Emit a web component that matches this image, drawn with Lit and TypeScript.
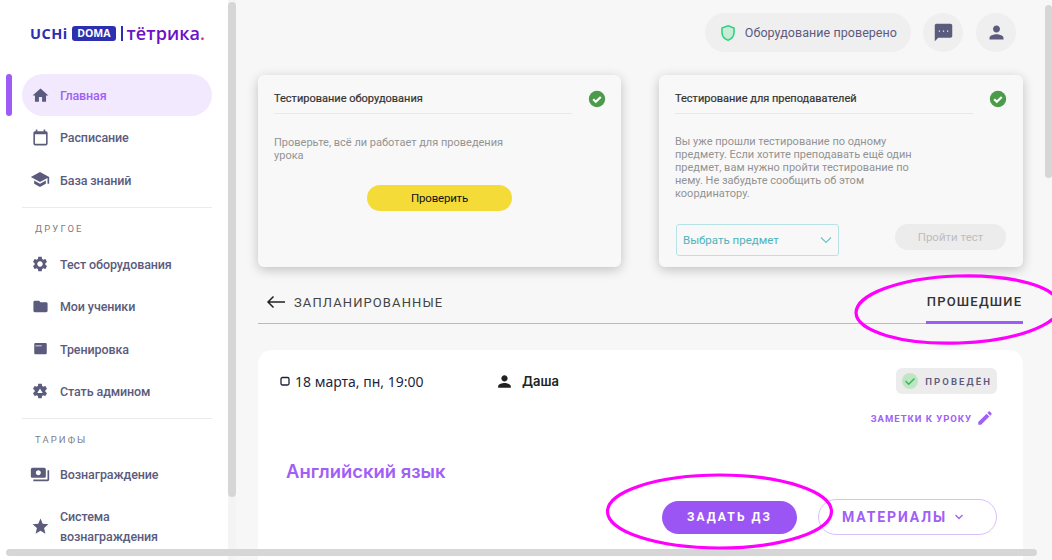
import { LitElement, html, css, svg } from "lit";
import { customElement } from "lit/decorators.js";

const P: Record<string, string> = {
  home: "M10 20v-6h4v6h5v-8h3L12 3 2 12h3v8z",
  cal: "M19 4h-1V2h-2v2H8V2H6v2H5c-1.11 0-1.99.9-1.99 2L3 20c0 1.1.89 2 2 2h14c1.1 0 2-.9 2-2V6c0-1.1-.9-2-2-2zm0 16H5V8h14v12z",
  school: "M5 13.18v4L12 21l7-3.82v-4L12 17l-7-3.82zM12 3L1 9l11 6 9-4.91V17h2V9L12 3z",
  gear: "M19.14 12.94c.04-.3.06-.61.06-.94 0-.32-.02-.64-.07-.94l2.03-1.58c.18-.14.23-.41.12-.61l-1.92-3.32c-.12-.22-.37-.29-.59-.22l-2.39.96c-.5-.38-1.03-.7-1.62-.94l-.36-2.54c-.04-.24-.24-.41-.48-.41h-3.84c-.24 0-.43.17-.47.41l-.36 2.54c-.59.24-1.13.57-1.62.94l-2.39-.96c-.22-.08-.47 0-.59.22L2.74 8.87c-.12.21-.08.47.12.61l2.03 1.58c-.05.3-.09.63-.09.94s.02.64.07.94l-2.03 1.58c-.18.14-.23.41-.12.61l1.92 3.32c.12.22.37.29.59.22l2.39-.96c.5.38 1.03.7 1.62.94l.36 2.54c.05.24.24.41.48.41h3.84c.24 0 .44-.17.47-.41l.36-2.54c.59-.24 1.13-.56 1.62-.94l2.39.96c.22.08.47 0 .59-.22l1.92-3.32c.12-.22.07-.47-.12-.61l-2.01-1.58zM12 15.6c-1.98 0-3.6-1.62-3.6-3.6s1.62-3.6 3.6-3.6 3.6 1.62 3.6 3.6-1.62 3.6-3.6 3.6z",
  admin: "M19.14 12.94c.04-.3.06-.61.06-.94 0-.32-.02-.64-.07-.94l2.03-1.58c.18-.14.23-.41.12-.61l-1.92-3.32c-.12-.22-.37-.29-.59-.22l-2.39.96c-.5-.38-1.03-.7-1.62-.94l-.36-2.54c-.04-.24-.24-.41-.48-.41h-3.84c-.24 0-.43.17-.47.41l-.36 2.54c-.59.24-1.13.57-1.62.94l-2.39-.96c-.22-.08-.47 0-.59.22L2.74 8.87c-.12.21-.08.47.12.61l2.03 1.58c-.05.3-.09.63-.09.94s.02.64.07.94l-2.03 1.58c-.18.14-.23.41-.12.61l1.92 3.32c.12.22.37.29.59.22l2.39-.96c.5.38 1.03.7 1.62.94l.36 2.54c.05.24.24.41.48.41h3.84c.24 0 .44-.17.47-.41l.36-2.54c.59-.24 1.13-.56 1.62-.94l2.39.96c.22.08.47 0 .59-.22l1.92-3.32c.12-.22.07-.47-.12-.61l-2.01-1.58zM12 8.500l3.600 6H8.400z",
  folder: "M10 4H4c-1.1 0-1.99.9-1.99 2L2 18c0 1.1.9 2 2 2h16c1.1 0 2-.9 2-2V8c0-1.1-.9-2-2-2h-8l-2-2z",
  web: "M20 3H4c-1.11 0-2 .9-2 2v14c0 1.1.89 2 2 2h16c1.100 0 2-.9 2-2V5c0-1.100-.9-2-2-2zM4 8.500V7h10v1.500H4z",
  pay: "M19 14V6c0-1.100-.9-2-2-2H3c-1.100 0-2 .9-2 2v8c0 1.100.9 2 2 2h14c1.100 0 2-.9 2-2zm-9-1c-1.660 0-3-1.340-3-3s1.340-3 3-3 3 1.340 3 3-1.340 3-3 3zm13-6v11c0 1.100-.9 2-2 2H4v-2h17V7h2z",
  star: "M12 17.270L18.180 21l-1.640-7.030L22 9.240l-7.190-.61L12 2 9.190 8.630 2 9.240l5.460 4.730L5.820 21z",
  chat: "M20 2H4c-1.100 0-2 .9-2 2v18l4-4h14c1.100 0 2-.9 2-2V4c0-1.100-.9-2-2-2zM8 11.200H6.600V9.800H8zm4.700 0h-1.400V9.800h1.400zm4.700 0H16V9.800h1.400z",
  person: "M12 12c2.210 0 4-1.790 4-4s-1.790-4-4-4-4 1.790-4 4 1.790 4 4 4zm0 2c-2.670 0-8 1.340-8 4v2h16v-2c0-2.660-5.330-4-8-4z",
  edit: "M3 17.250V21h3.750L17.810 9.940l-3.750-3.750L3 17.250zM20.710 7.040c.39-.39.39-1.020 0-1.410l-2.340-2.340c-.39-.39-1.020-.39-1.410 0l-1.830 1.830 3.750 3.750 1.830-1.830z",
};

const icon = (n: string, size = 20) =>
  html`<svg width=${size} height=${size} viewBox="0 0 24 24" fill="currentColor" fill-rule="evenodd"><path d=${P[n]}></path></svg>`;

const okBadge = html`<svg class="ok" width="18" height="18" viewBox="0 0 18 18"><circle cx="9" cy="9" r="8.200" fill="#4b9b4b"></circle><path d="M5.200 9.300l2.600 2.500 5-4.800" fill="none" stroke="#fff" stroke-width="2.200"></path></svg>`;

@customElement("app-root")
export class AppRoot extends LitElement {
  static styles = css`
    :host { display: block; position: relative; width: 1052px; height: 560px; overflow: hidden; background: #fff; font-family: Roboto, "Liberation Sans", sans-serif; }
    * { box-sizing: border-box; }
    .app { display: flex; height: 560px; }

    .side { flex: 0 0 236px; width: 236px; padding: 0 16px 0 22px; background: #fff; border-right: 8px solid #f4f4f4; color: #5b5b7e; }
    .logo { display: flex; align-items: center; height: 74px; padding: 0 0 8px 8px; white-space: nowrap; font-family: "Open Sans", sans-serif; font-weight: 700; }
    .uchi { color: #2b2fb0; font-size: 14.5px; letter-spacing: .5px; font-weight: 700; }
    .doma { background: #2b2fb0; color: #fff; font-size: 10.5px; border-radius: 3px; padding: 1px 5.500px; margin: 0 5px 0 4px; line-height: 13px; }
    .bar { width: 1.5px; height: 15px; background: #2b2fb0; margin-right: 4px; }
    .tetrika { color: #6a11c9; font-size: 18px; font-weight: 600; letter-spacing: .1px; line-height: 18px; }
    .dot { color: #e8288f; }
    .item { position: relative; display: flex; align-items: center; gap: 10px; height: 42.3px; padding-left: 8px; font-size: 12.5px; line-height: 20px; font-weight: 500; letter-spacing: -.1px; }
    .ic { flex: none; display: flex; align-items: center; justify-content: center; width: 20px; }
    .lab { padding-top: 2px; }
    .item.active { background: #f2e9fe; border-radius: 21px; color: #a060f5; }
    .item.active .ic { color: #5b5b7e; }
    .item.active::before { content: ""; position: absolute; left: -16px; top: 0; width: 6px; height: 42px; border-radius: 3px; background: #9d5cf5; }
    .item.tall { height: 62px; }
    .sep { height: 1px; background: #ebebeb; margin-top: 6px; }
    .group { height: 35px; padding: 14px 0 0 13px; font-size: 9.5px; line-height: 14px; letter-spacing: 2.1px; color: #7d7d85; font-weight: 400; }
    .group.short { height: 34px; }

    .main { flex: 1; min-width: 0; background: #f7f7f7; padding: 0 29px 0 22px; }
    .top { display: flex; justify-content: flex-end; align-items: center; gap: 12px; height: 75px; padding: 0 7px 10px 0; color: #5b5b7e; }
    .pill { display: flex; align-items: center; gap: 8px; height: 39px; padding: 0 14px 0 14px; border-radius: 20px; background: #efefef; font-size: 12.5px; font-weight: 400; letter-spacing: .05px; }
    .circle { display: flex; align-items: center; justify-content: center; width: 40px; height: 39px; border-radius: 50%; background: #efefef; }
    .circle + .circle { margin-left: 1px; }

    .cards { display: grid; grid-template-columns: 363px 364px; gap: 38px; }
    .card { position: relative; height: 192px; background: #f8f8f8; border-radius: 6px; box-shadow: 0 3px 12px rgba(0,0,0,.22); padding: 15px 16px; }
    .card h3 { margin: 0; width: 298px; height: 24px; font-size: 11px; line-height: 17px; font-weight: 400; color: #333; border-bottom: 1px solid #e9e9e9; -webkit-text-stroke: .2px #333; }
    .ok { position: absolute; left: 330px; top: 15px; }
    .card p { margin: 22px 0 0; width: 240px; font-size: 11px; line-height: 13px; color: #939393; }
    .card.two p { margin-top: 21px; }
    .action { display: flex; justify-content: center; margin-top: 23px; }
    .yellow { display: flex; align-items: center; justify-content: center; width: 145px; height: 26px; border-radius: 13px; background: #f4db37; color: #111; font-size: 11.5px; letter-spacing: -.2px; }
    .row { display: flex; justify-content: space-between; align-items: flex-start; margin-top: 24px; padding: 0 1px; }
    .select { display: flex; align-items: center; justify-content: space-between; width: 163px; height: 32px; padding: 0 6px 0 6px; border: 1px solid #b8e3e6; border-radius: 3px; font-size: 11.5px; color: #4fb3ba; }
    .gray { display: flex; align-items: center; justify-content: center; width: 111px; height: 26px; border-radius: 13px; background: #ececec; color: #bdbdbd; font-size: 11.5px; }

    .tabs { display: flex; justify-content: space-between; align-items: stretch; height: 57px; border-bottom: 1px solid #bbb; font-size: 13px; letter-spacing: 1.1px; color: #444; }
    .tab { display: flex; align-items: center; gap: 8px; padding: 14px 0 0 8px; font-weight: 400; }
    .tab.on { padding: 14px 0 0; width: 97px; justify-content: center; color: #333; font-weight: 500; letter-spacing: 1.2px; border-bottom: 3px solid #9d5cf5; margin-bottom: -1px; white-space: nowrap; }

    .lesson { margin-top: 26px; height: 230px; background: #fff; border-radius: 14px; padding: 19px 26px 0 22px; }
    .meta { display: flex; align-items: flex-start; }
    .when { display: flex; align-items: center; gap: 5px; width: 215px; height: 24px; font-size: 14px; color: #1f1f3c; font-family: "Noto Sans", sans-serif; }
    .who { display: flex; align-items: center; gap: 8px; height: 24px; font-size: 13px; font-weight: 600; color: #222; font-family: Inter, sans-serif; }
    .status { display: flex; align-items: center; gap: 6px; margin-left: auto; height: 26px; margin-top: -1px; padding: 0 5px 0 5px; border-radius: 6px; background: #ececec; font-size: 9.5px; font-weight: 600; letter-spacing: 2.1px; color: #5b5b7e; }
    .notes { display: flex; align-items: center; justify-content: flex-end; gap: 4px; margin-top: 16px; padding-right: 3px; font-size: 9.5px; font-weight: 700; letter-spacing: 1px; color: #a060f5; height: 16px; }
    .subject { margin-top: 33px; margin-left: 6px; font-size: 18.4px; line-height: 24px; font-weight: 600; color: #a060f5; font-family: Inter, sans-serif; }
    .btns { display: flex; justify-content: flex-end; align-items: center; gap: 21px; margin-top: 16px; }
    .hw { display: flex; align-items: center; justify-content: center; width: 135px; height: 33px; border-radius: 17px; background: #9a55f4; color: #fff; font-size: 12px; font-weight: 700; letter-spacing: 2.1px; }
    .mat { display: flex; align-items: center; justify-content: center; gap: 7px; width: 179px; height: 36px; padding-right: 9px; border-radius: 18px; border: 1px solid #d9bffb; color: #a060f5; font-size: 14px; font-weight: 700; letter-spacing: 1.9px; }

    .vbar { position: absolute; left: 228px; top: 2px; width: 8px; height: 495px; background: #d6d6d6; border-radius: 4px; }
    .mbar { position: absolute; left: 1045px; top: 5px; width: 7px; height: 173px; background: #d6d6d6; border-radius: 4px; }
    .hbar { position: absolute; left: 6px; top: 549px; width: 1031px; height: 7px; background: #d6d6d6; border-radius: 4px; }
    .ink { position: absolute; inset: 0; width: 1052px; height: 560px; pointer-events: none; }
  `;

  private nav(i: string, t: unknown, size = 18, cls = "") {
    return html`<div class="item ${cls}"><span class="ic">${icon(i, size)}</span><span class="lab">${t}</span></div>`;
  }

  render() {
    return html`
      <div class="app">
        <aside class="side">
          <div class="logo">
            <span class="uchi">UCHi</span><span class="doma">DOMA</span><span class="bar"></span><span class="tetrika">тётрика<span class="dot">.</span></span>
          </div>
          ${this.nav("home", "Главная", 19, "active")}
          ${this.nav("cal", "Расписание", 19)}
          ${this.nav("school", "База знаний", 21)}
          <div class="sep"></div>
          <div class="group">ДРУГОЕ</div>
          ${this.nav("gear", "Тест оборудования", 18)}
          ${this.nav("folder", "Мои ученики", 17)}
          ${this.nav("web", "Тренировка", 15)}
          ${this.nav("admin", "Стать админом", 18)}
          <div class="sep"></div>
          <div class="group short">ТАРИФЫ</div>
          ${this.nav("pay", "Вознаграждение", 21)}
          ${this.nav("star", html`Система<br />вознаграждения`, 19, "tall")}
        </aside>
        <main class="main">
          <div class="top">
            <div class="pill">
              <svg width="18" height="18" viewBox="0 0 18 18"><path d="M9 1.800l6 2.200v4.500c0 3.600-2.400 6.400-6 7.700-3.600-1.300-6-4.100-6-7.700V4z" fill="#c9ecd8" stroke="#2fd47f" stroke-width="1.600"></path></svg>
              <span>Оборудование проверено</span>
            </div>
            <div class="circle">${icon("chat", 21)}</div>
            <div class="circle">${icon("person", 21)}</div>
          </div>
          <div class="cards">
            <section class="card">
              <h3>Тестирование оборудования</h3>${okBadge}
              <p>Проверьте, всё ли работает для проведения урока</p>
              <div class="action"><div class="yellow">Проверить</div></div>
            </section>
            <section class="card two">
              <h3>Тестирование для преподавателей</h3>${okBadge}
              <p>Вы уже прошли тестирование по одному предмету. Если хотите преподавать ещё один предмет, вам нужно пройти тестирование по нему. Не забудьте сообщить об этом координатору.</p>
              <div class="row">
                <div class="select"><span>Выбрать предмет</span><svg width="12" height="8" viewBox="0 0 12 8"><path d="M1 1.500l5 5 5-5" fill="none" stroke="#6fc4ca" stroke-width="1.200"></path></svg></div>
                <div class="gray">Пройти тест</div>
              </div>
            </section>
          </div>
          <div class="tabs">
            <div class="tab"><svg width="20" height="14" viewBox="0 0 20 14"><path d="M19 7H2M7.500 1.500L2 7l5.500 5.500" fill="none" stroke="#222" stroke-width="1.500"></path></svg><span>ЗАПЛАНИРОВАННЫЕ</span></div>
            <div class="tab on">ПРОШЕДШИЕ</div>
          </div>
          <section class="lesson">
            <div class="meta">
              <div class="when"><svg width="10" height="10" viewBox="0 0 10 10"><rect x="1" y="1.500" width="8" height="7.500" rx="1.500" fill="none" stroke="#1f1f3c" stroke-width="1.300"></rect></svg><span>18 марта, пн, 19:00</span></div>
              <div class="who">${icon("person", 19)}<span>Даша</span></div>
              <div class="status"><svg width="18" height="18" viewBox="0 0 18 18"><circle cx="9" cy="9" r="8" fill="#bfe6c4"></circle><path d="M4.500 9l3.200 3.200 5.800-5.700" fill="none" stroke="#35b84f" stroke-width="1.400"></path></svg><span>ПРОВЕДЁН</span></div>
            </div>
            <div class="notes"><span>ЗАМЕТКИ К УРОКУ</span>${icon("edit", 18)}</div>
            <div class="subject">Английский язык</div>
            <div class="btns">
              <div class="hw">ЗАДАТЬ ДЗ</div>
              <div class="mat"><span>МАТЕРИАЛЫ</span><svg width="10" height="6" viewBox="0 0 10 6"><path d="M1.500 1l3.500 3.500L8.500 1" fill="none" stroke="#a060f5" stroke-width="1.400"></path></svg></div>
            </div>
          </section>
        </main>
      </div>
      <div class="vbar"></div><div class="mbar"></div><div class="hbar"></div>
      <svg class="ink" viewBox="0 0 1052 560" fill="none" stroke="#f0f" stroke-width="3.200">
        ${svg`<ellipse cx="958" cy="309.500" rx="102" ry="33.500" transform="rotate(-2 958 309.500)"></ellipse><ellipse cx="719.500" cy="511.500" rx="112" ry="36.500"></ellipse>`}
      </svg>
    `;
  }
}
